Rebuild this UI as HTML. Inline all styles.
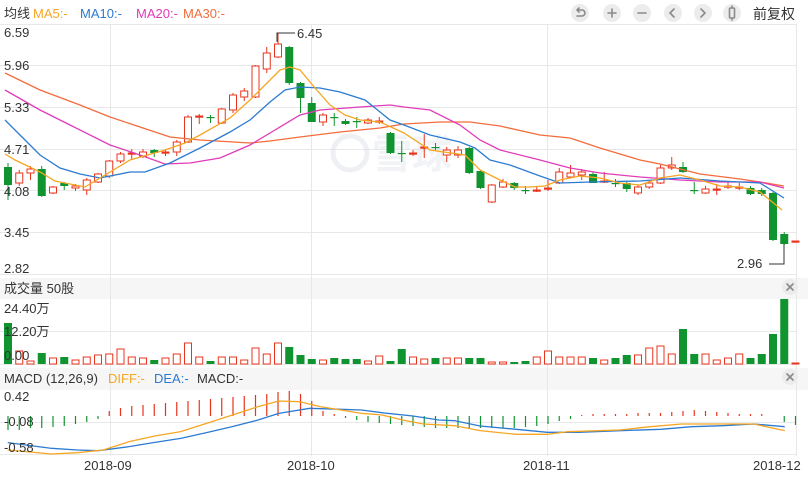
<!DOCTYPE html>
<html><head><meta charset="utf-8"><style>
body{margin:0;background:#fff;width:808px;height:477px;overflow:hidden;font-family:"Liberation Sans","Noto Sans CJK SC",sans-serif}
svg{display:block}
text{font-family:"Liberation Sans","Noto Sans CJK SC",sans-serif}
</style></head><body>
<svg id="s" width="808" height="477" xmlns="http://www.w3.org/2000/svg">
<rect x="0" y="278" width="808" height="21" fill="#f6f6f6"/>
<rect x="0" y="368" width="808" height="22" fill="#f6f6f6"/>
<g stroke="#e8e8e8" stroke-width="1">
<line x1="0" y1="24.5" x2="796" y2="24.5"/>
<line x1="0" y1="65.5" x2="796" y2="65.5"/>
<line x1="0" y1="107.5" x2="796" y2="107.5"/>
<line x1="0" y1="149.5" x2="796" y2="149.5"/>
<line x1="0" y1="190.5" x2="796" y2="190.5"/>
<line x1="0" y1="232.5" x2="796" y2="232.5"/>
<line x1="0" y1="274.5" x2="796" y2="274.5"/>
<line x1="0" y1="331.5" x2="796" y2="331.5"/>
<line x1="0" y1="364.5" x2="796" y2="364.5"/>
<line x1="0" y1="422.5" x2="796" y2="422.5"/>
<line x1="0" y1="454.5" x2="796" y2="454.5"/>
<line x1="110.5" y1="24" x2="110.5" y2="456"/>
<line x1="311.5" y1="24" x2="311.5" y2="456"/>
<line x1="547.5" y1="24" x2="547.5" y2="456"/>
<line x1="796.5" y1="24" x2="796.5" y2="456"/>
</g>
<g opacity="0.4">
<circle cx="350" cy="153" r="17" fill="none" stroke="#d5dbe3" stroke-width="5"/>
<text x="372" y="168" font-size="40" fill="#dde2e9" font-weight="bold">雪球</text>
</g>
<g id="c"></g>
<text x="4" y="18" font-size="13" fill="#333">均线</text>
<text x="33" y="18" font-size="13" fill="#f5a623">MA5:-</text>
<text x="80" y="18" font-size="13" fill="#2c7bd1">MA10:-</text>
<text x="136" y="18" font-size="13" fill="#e23bb8">MA20:-</text>
<text x="183" y="18" font-size="13" fill="#f36c3c">MA30:-</text>
<g font-size="13" fill="#333">
<text x="4" y="37">6.59</text><text x="4" y="70">5.96</text><text x="4" y="112">5.33</text>
<text x="4" y="154">4.71</text><text x="4" y="196">4.08</text><text x="4" y="237">3.45</text><text x="4" y="273">2.82</text>
<text x="4" y="293">成交量 50股</text>
<text x="4" y="313">24.40万</text><text x="4" y="336">12.20万</text><text x="4" y="360">0.00</text>
<text x="4" y="383">MACD (12,26,9)</text>
<text x="4" y="401">0.42</text><text x="4" y="426">-0.08</text><text x="4" y="452">-0.58</text>
<text x="84" y="470">2018-09</text><text x="287" y="470">2018-10</text><text x="523" y="470">2018-11</text><text x="753" y="470">2018-12</text>
</g>
<text x="108" y="383" font-size="13" fill="#f5a623">DIFF:-</text>
<text x="154" y="383" font-size="13" fill="#2c7bd1">DEA:-</text>
<text x="197" y="383" font-size="13" fill="#333">MACD:-</text>
<path d="M277 42V33H295" fill="none" stroke="#333" stroke-width="1"/>
<text x="297" y="38" font-size="13" fill="#333">6.45</text>
<path d="M784 244V264H769" fill="none" stroke="#333" stroke-width="1"/>
<text x="737" y="268" font-size="13" fill="#333">2.96</text>
<g fill="#ececec"><circle cx="580" cy="13" r="9"/><circle cx="612" cy="13" r="9"/><circle cx="642" cy="13" r="9"/><circle cx="673" cy="13" r="9"/><circle cx="703" cy="13" r="9"/><circle cx="732" cy="13" r="9"/>
<circle cx="790" cy="287" r="8"/><circle cx="790" cy="377" r="8"/></g>
<g stroke="#8a8a8a" stroke-width="1.6" fill="none" stroke-linecap="round">
<path d="M577 10H582A3 3 0 0 1 582 16H577M577 10L579 8M577 10L579 12"/>
<path d="M608 13H616M612 9V17"/><path d="M638 13H646"/>
<path d="M674 9L670 13L674 17"/><path d="M701 9L705 13L701 17"/>
<rect x="729.5" y="8" width="5" height="10" rx="1"/><path d="M732 6V8M732 18V20"/>
<path d="M787 284L793 290M793 284L787 290M787 374L793 380M793 374L787 380"/>
</g>
<text x="753" y="19" font-size="14" fill="#333">前复权</text>
</svg>
<script>
var R='#e8341c',G='#109430',g=document.getElementById('c'),NS='http://www.w3.org/2000/svg';
function X(i){return 8+11.25*i}
function el(t,a){var e=document.createElementNS(NS,t);for(var k in a)e.setAttribute(k,a[k]);g.appendChild(e);return e}
var C=[['g',167,185,163,200],['r',173,183,170,186],['r',169,173,166,180],['g',169,196,166,197],['r',187,193,186,194],['g',183,186,182,190],['r',186,188,184,191],['r',180,190,178,195],['r',174,182,173,183],['r',161,176,160,178],
['r',154,161,152,163],['r',153,154,149,160],['r',152,156,149,158],['g',150,153,149,157],['r',152,153,149,156],['r',142,152,140,156],['r',117,142,115,143],['r',116,117,114,124],['g',117,118,115,123],['r',109,123,108,124],
['r',95,110,93,113],['r',91,97,88,101],['r',66,97,65,98],['r',53,69,47,73],['r',44,57,33,58],['g',47,83,46,85],['g',83,98,82,113],['g',103,122,97,122],['r',115,122,113,126],['g',117,117,113,126],
['g',121,124,119,125],['g',121,121,117,128],['r',120,123,118,124],['r',121,121,117,124],['g',133,153,132,154],['g',153,153,141,162],['r',153,153,150,156],['r',147,147,134,158],['g',147,147,143,151],['r',150,155,147,162],
['r',150,155,146,158],['g',148,173,147,174],['g',171,188,170,189],['r',185,202,184,203],['r',182,187,179,188],['g',183,188,182,190],['g',190,190,186,194],['r',190,190,187,192],['r',188,188,180,191],['r',172,183,168,184],
['r',173,177,165,178],['r',172,175,169,180],['g',174,183,172,183],['r',181,181,172,183],['g',183,183,179,187],['g',183,189,182,192],['r',187,193,185,195],['r',183,187,181,189],['r',168,183,165,184],['r',165,168,157,170],
['g',167,172,162,173],['g',190,190,182,194],['r',189,193,186,194],['r',189,189,184,195],['r',186,186,182,189],['r',187,187,183,190],['g',188,194,186,195],['g',190,194,188,196],['g',193,240,192,241],['g',234,244,232,245],['r',241,241,241,241]];
C.forEach(function(c,i){var x=X(i),col=c[0]=='r'?R:G;
el('line',{x1:x,x2:x,y1:c[3],y2:c[4],stroke:col,'stroke-width':1});
var h=Math.max(c[2]-c[1],1.2);
if(c[0]=='r')el('rect',{x:x-3.5,y:c[1],width:7,height:h,fill:c[2]-c[1]<2?R:'#fff',stroke:R,'stroke-width':1});
else el('rect',{x:x-4,y:c[1],width:8,height:h,fill:G});});
function pl(pts,col){el('polyline',{points:pts.map(function(p){return p.join(',')}).join(' '),fill:'none',stroke:col,'stroke-width':1.3});}
pl([[5,73],[40,90],[80,105],[110,117],[140,127],[170,137],[200,140],[250,143],[270,141],[300,137],[340,132],[380,128],[404,124],[440,122],[470,122],[500,126],[540,135],[570,138],[600,148],[640,160],[660,164],[700,174],[740,179],[760,182],[784,186]],'#f36c3c');
pl([[5,90],[40,110],[70,125],[110,145],[140,155],[165,164],[190,163],[220,158],[250,145],[275,130],[300,115],[320,110],[360,107],[390,105],[404,107],[430,110],[460,125],[480,140],[500,150],[540,160],[570,168],[600,173],[640,177],[680,180],[720,182],[760,182],[784,188]],'#e23bb8');
pl([[5,120],[20,135],[40,155],[60,168],[80,174],[100,178],[130,172],[145,172],[170,163],[200,148],[230,132],[250,120],[270,102],[285,90],[300,87],[320,88],[340,92],[365,100],[390,120],[404,125],[430,135],[460,142],[475,148],[490,160],[510,165],[540,176],[560,183],[590,182],[640,181],[680,178],[720,181],[760,183],[784,198]],'#2c7bd1');
pl([[5,154],[15,160],[40,172],[55,181],[85,187],[100,178],[130,160],[165,150],[185,143],[200,135],[230,118],[250,100],[265,85],[280,70],[290,67],[300,70],[315,88],[330,105],[345,115],[360,120],[380,122],[404,133],[430,150],[465,155],[480,170],[500,180],[515,187],[530,187],[545,186],[560,180],[580,176],[600,178],[620,183],[640,185],[660,178],[680,175],[700,180],[720,186],[740,187],[760,192],[782,210]],'#f5a623');
var V=[41,13,3,11,6,7,4,7,9,10,15,7,6,4,6,10,21,7,3,7,7,4,16,10,21,17,9,5,4,6,5,5,3,8,3,15,7,5,6,6,6,6,6,2,2,2,3,7,13,7,7,7,6,4,6,9,9,16,18,10,35,10,10,4,6,10,6,10,30,65,1];
V.forEach(function(h,i){var x=X(i),c=C[i][0];
if(c=='r')el('rect',{x:x-3.5,y:364-h,width:7,height:h,fill:'#fff',stroke:R,'stroke-width':1});
else el('rect',{x:x-4,y:364-h,width:8,height:h,fill:G});});
var M=[-14,-14,-12,-12,-11,-10,-8,-6,-3,5,8,10,11,12,13,14,15,16,17,18,19,20,21,22,24,25,22,15,5,2,-2,-4,-6,-7,-8,-9,-10,-11,-12,-12,-12,-12,-12,-12,-12,-12,-11,-10,-8,-5,-3,1,2,2,2,2,3,3,3,4,5,6,5,4,3,2,2,2,0,-6,-9];
M.forEach(function(v,i){var x=X(i);if(v==0)return;
el('line',{x1:x,x2:x,y1:416,y2:416-v,stroke:v>0?R:G,'stroke-width':1.2});});
function mp(a){return a.map(function(p){return [p[0]/1.937,p[1]/3+270]})}
pl(mp([[15,518],[100,535],[150,540],[190,542],[250,530],[300,517],[350,505],[400,488],[450,470],[500,450],[540,430],[600,415],[660,418],[700,420],[750,430],[800,438],[850,450],[880,452],[930,468],[1000,478],[1060,487],[1120,487],[1200,482],[1280,478],[1340,470],[1400,467],[1460,462],[1520,470]]),'#2c7bd1');
pl(mp([[15,540],[100,552],[150,548],[200,540],[250,515],[300,498],[350,485],[400,460],[450,435],[500,410],[540,393],[580,395],[620,410],[660,420],[700,430],[740,435],[780,450],[820,462],[880,467],[930,482],[1000,493],[1060,493],[1100,485],[1200,480],[1260,470],[1320,462],[1400,462],[1460,462],[1520,482]]),'#f5a623');
</script>
</body></html>
